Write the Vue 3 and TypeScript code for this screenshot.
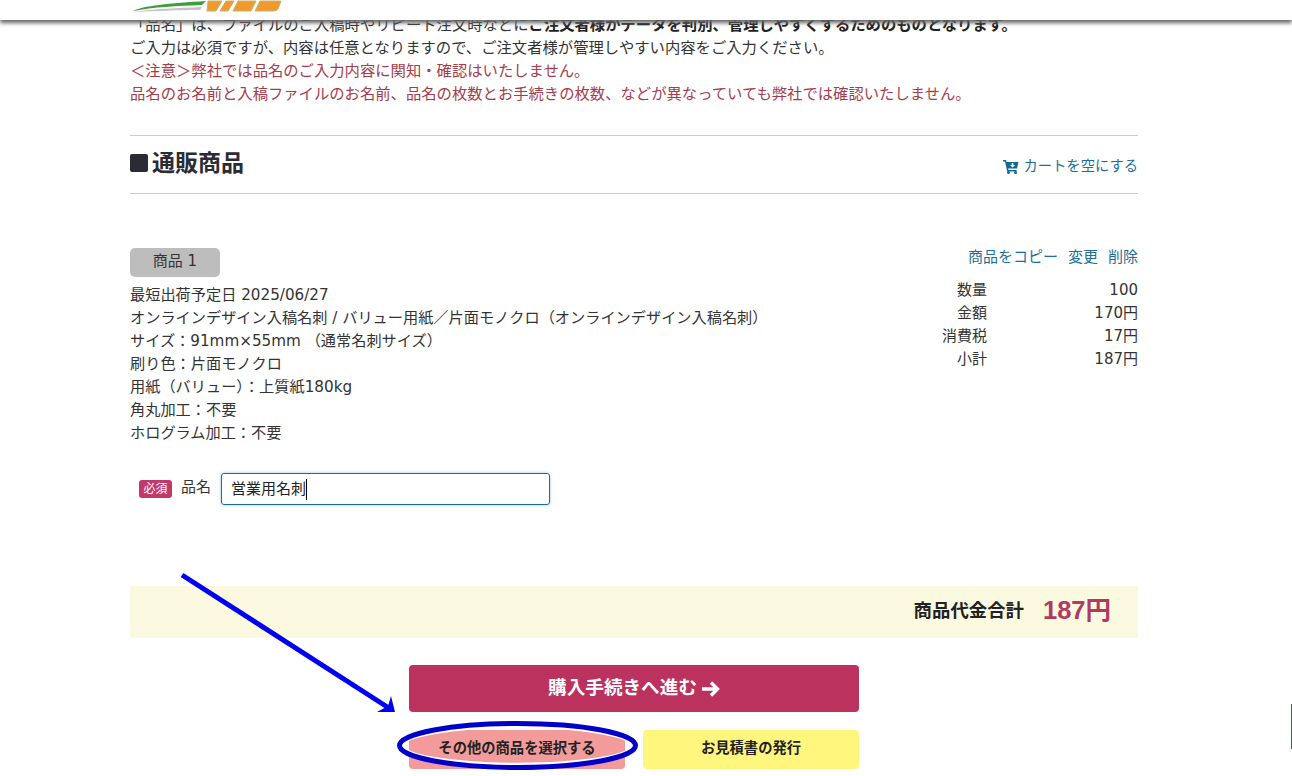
<template>
  <div class="page">
    <header class="top-bar">
      <svg class="logo" width="154" height="14" viewBox="0 0 154 14">
        <path d="M3 11 C12 6 40 3 76 1 L72 5 C46 6 24 7 3 11Z" fill="#3f9e3c" />
        <path d="M3 12 C24 9 48 8 72 7 L70 10 C48 10 24 11 3 12Z" fill="#c4c4c4" />
        <g fill="#ee9a2c" stroke="#cdb069" stroke-width="1">
          <path d="M78 1 H92 L86 11 H77Z" />
          <path d="M96 1 H104 L98 11 H90Z" />
          <path d="M108 1 H126 L121 11 H103Z" />
          <path d="M130 1 H151 L148 9 Q147 11 143 11 H125Z" />
        </g>
      </svg>
    </header>

    <main class="content">
      <section class="notes">
        <p>「品名」は、ファイルのご入稿時やリピート注文時などに<b>ご注文者様がデータを判別、管理しやすくするためのものとなります。</b></p>
        <p>ご入力は必須ですが、内容は任意となりますので、ご注文者様が管理しやすい内容をご入力ください。</p>
        <p class="warn">＜注意＞弊社では品名のご入力内容に関知・確認はいたしません。</p>
        <p class="warn">品名のお名前と入稿ファイルのお名前、品名の枚数とお手続きの枚数、などが異なっていても弊社では確認いたしません。</p>
      </section>

      <div class="section-head">
        <h2><span class="square"></span>通販商品</h2>
        <a class="link empty-cart">
          <svg width="16" height="15" viewBox="0 0 16 15">
            <path d="M0 1 H3 L3.6 3 H15.5 L14 9.5 H5.2 L5.5 11 H13.6 V12.4 H4.2 L2 2.4 H0Z" fill="#0f6a94" />
            <circle cx="5.5" cy="13.5" r="1.5" fill="#0f6a94" />
            <circle cx="12.5" cy="13.5" r="1.5" fill="#0f6a94" />
            <path d="M8.7 4 H10.3 V6 H12 L9.5 8.6 L7 6 H8.7Z" fill="#fff" />
          </svg>
          カートを空にする
        </a>
      </div>

      <section class="item">
        <div class="item-main">
          <div class="item-tag">商品 1</div>
          <div class="item-spec">
            <div v-for="line in specLines" :key="line">{{ line }}</div>
          </div>
          <div class="name-row">
            <span class="required">必須</span>
            <label>品名</label>
            <div class="fake-input">営業用名刺<span class="caret"></span></div>
          </div>
        </div>
        <div class="item-side">
          <div class="item-links">
            <a class="link">商品をコピー</a>
            <a class="link">変更</a>
            <a class="link">削除</a>
          </div>
          <dl class="prices">
            <template v-for="row in priceRows" :key="row.label">
              <dt>{{ row.label }}</dt>
              <dd>{{ row.value }}</dd>
            </template>
          </dl>
        </div>
      </section>

      <div class="total">
        <span class="total-label">商品代金合計</span>
        <span class="total-value">187円</span>
      </div>

      <div class="actions">
        <button class="btn-primary">購入手続きへ進む
          <svg width="19" height="16" viewBox="0 0 19 16">
            <path d="M1 8 H16 M10 1.5 L16.5 8 L10 14.5" fill="none" stroke="#fff" stroke-width="3.4" />
          </svg>
        </button>
        <div class="actions-sub">
          <button class="btn-sub btn-pink">その他の商品を選択する</button>
          <button class="btn-sub btn-yellow">お見積書の発行</button>
        </div>
      </div>
    </main>

    <!-- annotation drawn over the screenshot -->
    <svg class="annotation" width="1292" height="776" viewBox="0 0 1292 776">
      <defs>
        <clipPath id="corner-clip">
          <rect x="400" y="724" width="235" height="22" />
        </clipPath>
      </defs>
      <!-- the hand-drawn ring wipes the button corners above it -->
      <path
        clip-path="url(#corner-clip)"
        fill="#fff"
        fill-rule="evenodd"
        d="M400 724 H635 V746 H400Z M399.5 745.5 A118 22 0 0 0 635.5 745.5 A118 22 0 0 0 399.5 745.5Z"
      />
      <ellipse cx="517.5" cy="745.5" rx="114.5" ry="18.5" fill="none" stroke="#fff" stroke-width="2.5" />
      <ellipse cx="517.5" cy="745.5" rx="118" ry="22" fill="none" stroke="#0000c8" stroke-width="5" />
      <path d="M182 575 L392 710" stroke="#0000f0" stroke-width="5" fill="none" />
      <path d="M395 712 L377 712 L388 706 L391 696Z" fill="#0000f0" />
    </svg>
    <div class="side-edge"></div>
  </div>
</template>

<script setup lang="ts">
const specLines: string[] = [
  '最短出荷予定日 2025/06/27',
  'オンラインデザイン入稿名刺 / バリュー用紙／片面モノクロ（オンラインデザイン入稿名刺）',
  'サイズ：91mm×55mm （通常名刺サイズ）',
  '刷り色：片面モノクロ',
  '用紙（バリュー）：上質紙180kg',
  '角丸加工：不要',
  'ホログラム加工：不要',
]

const priceRows: { label: string; value: string }[] = [
  { label: '数量', value: '100' },
  { label: '金額', value: '170円' },
  { label: '消費税', value: '17円' },
  { label: '小計', value: '187円' },
]
</script>

<style>
html,
body {
  margin: 0;
  background: #fff;
  overflow: hidden;
}
</style>

<style scoped>
.page {
  position: relative;
  height: 776px;
  overflow: hidden;
  font-family: "DejaVu Sans", "Noto Sans CJK JP", sans-serif;
  font-size: 15px;
  line-height: 23px;
  color: #333;
}

.top-bar {
  position: absolute;
  top: 0;
  left: 0;
  right: 0;
  height: 20px;
  background: #fff;
  box-shadow: 0 3px 4px #666;
  z-index: 2;
}

.logo {
  display: block;
  margin-left: 130px;
}

.content {
  width: 1008px;
  margin-left: 130px;
  padding-top: 14px;
}

.notes {
  font-size: 15.33px;
}

.notes p {
  margin: 0;
}

.notes b {
  color: #222;
}

.warn {
  color: #a63b4b;
}

.section-head {
  display: flex;
  justify-content: space-between;
  align-items: center;
  height: 57px;
  margin-top: 29px;
  border-top: 1px solid #ccc;
  border-bottom: 1px solid #ccc;
}

.section-head h2 {
  display: flex;
  align-items: center;
  gap: 4px;
  margin: 0;
  padding-bottom: 3px;
  font-size: 23px;
  font-weight: 700;
  color: #2b2b36;
}

.square {
  width: 18px;
  height: 18px;
  border-radius: 2px;
  background: #2b2b36;
}

.link {
  color: #1d6f98;
}

.empty-cart {
  display: flex;
  align-items: center;
  gap: 4px;
  padding-top: 3px;
  font-size: 14.3px;
}

.item {
  display: flex;
  justify-content: space-between;
  margin-top: 54px;
}

.item-tag {
  width: 90px;
  height: 29px;
  border-radius: 5px;
  background: #bdbdbd;
  text-align: center;
  line-height: 27px;
}

.item-spec {
  margin-top: 7px;
  font-size: 15.2px;
}

.name-row {
  display: flex;
  align-items: center;
  margin-top: 28px;
  padding-left: 9px;
}

.required {
  width: 33px;
  height: 18px;
  border-radius: 3px;
  background: #c0396b;
  color: #fff;
  font-size: 12px;
  line-height: 18px;
  text-align: center;
}

.name-row label {
  margin-left: 9px;
  position: relative;
  top: -2px;
}

.fake-input {
  display: flex;
  align-items: center;
  width: 318px;
  height: 30px;
  margin-left: 10px;
  padding-left: 9px;
  border: 1px solid #1d6f98;
  border-radius: 3px;
  box-shadow: 0 0 3px #7fc4ea;
  color: #222;
}

.caret {
  width: 1px;
  height: 21px;
  background: #000;
}

.item-side {
  width: 197px;
}

.item-links {
  display: flex;
  justify-content: flex-end;
  gap: 10px;
  height: 20px;
  margin-top: -2px;
}

.prices {
  display: grid;
  grid-template-columns: 1fr 151px;
  margin: 13px 0 0;
  text-align: right;
}

.prices dd {
  margin: 0;
}

.total {
  display: flex;
  justify-content: flex-end;
  align-items: center;
  gap: 19px;
  box-sizing: border-box;
  height: 52px;
  margin-top: 81px;
  padding: 0 27px 4px 0;
  background: #fcf9e1;
}

.total-label {
  font-size: 18.4px;
  font-weight: 700;
  color: #222;
}

.total-value {
  font-family: "Liberation Sans", "Noto Sans CJK JP", sans-serif;
  font-size: 25.5px;
  font-weight: 700;
  color: #b03a60;
}

.actions {
  display: flex;
  flex-direction: column;
  width: 450px;
  margin: 27px 0 0 279px;
}

.btn-primary {
  display: flex;
  justify-content: center;
  align-items: center;
  gap: 4px;
  height: 47px;
  padding: 0 0 6px;
  border: 0;
  border-radius: 4px;
  background: #bc325f;
  color: #fff;
  font: 700 18.6px "DejaVu Sans", "Noto Sans CJK JP", sans-serif;
}

.btn-primary svg {
  position: relative;
  top: 3px;
}

.actions-sub {
  display: flex;
  justify-content: space-between;
  margin-top: 18px;
}

.btn-sub {
  width: 216px;
  height: 39px;
  padding: 0 0 6px;
  border: 0;
  border-radius: 4px;
  color: #222;
  font: 700 14.3px "DejaVu Sans", "Noto Sans CJK JP", sans-serif;
}

.btn-pink {
  background: #f39a9a;
}

.btn-yellow {
  background: #fff67e;
}

.annotation {
  position: absolute;
  top: 0;
  left: 0;
  z-index: 3;
  pointer-events: none;
}

.side-edge {
  position: absolute;
  right: 0;
  top: 704px;
  width: 1px;
  height: 45px;
  background: #1c7a50;
}
</style>
